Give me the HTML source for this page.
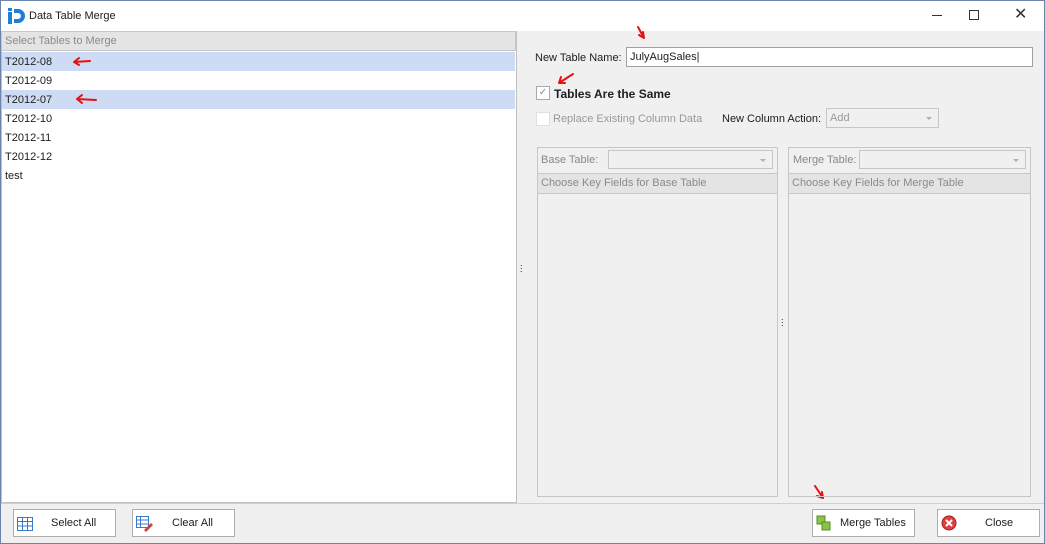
<!DOCTYPE html>
<html><head><style>
*{box-sizing:border-box;margin:0;padding:0}
body{width:1045px;height:544px;background:#f0f0f0;font-family:"Liberation Sans",sans-serif;font-size:11px;color:#202020;position:relative;overflow:hidden}
.a{position:absolute}
.win{left:0;top:0;width:1045px;height:544px;border:1px solid #6d84a8}
.title{left:1px;top:1px;width:1043px;height:30px;background:#fff}
.row{left:2px;width:513px;height:19px;padding:4px 0 0 3px}
.sel{background:#cddcf4}
.hdr{background:#e4e4e4;border:1px solid #c8c8c8;color:#8a8a8a;padding:3px 3px}
.btn{background:#fff;border:1px solid #adadad;height:28px;top:509px}
.btn span{position:absolute;top:7px}
.dd{background:#f0f0f0;border:1px solid #c6c6c6;height:19px}
.dd:after{content:"";position:absolute;right:6px;top:8px;border:3px solid transparent;border-top:3px solid #b0b0b0}
</style></head><body>
<div class="a win"></div>
<div class="a title"></div>
<svg class="a" style="left:7px;top:7px" width="18" height="18"><rect x="1" y="5" width="4" height="12" fill="#1f7fd8"/><rect x="1" y="1" width="4" height="3" fill="#1f7fd8"/><path d="M7 2h4a7 7 0 0 1 0 14h-4v-4h4a3 3 0 0 0 0-6h-4z" fill="#1f7fd8"/></svg>
<div class="a" style="left:29px;top:10px;font-size:11px">Data Table Merge</div>
<div class="a" style="left:932px;top:15px;width:10px;height:1px;background:#333"></div>
<div class="a" style="left:969px;top:10px;width:10px;height:10px;border:1px solid #333"></div>
<div class="a" style="left:1014px;top:4px;font-size:16px;color:#333">✕</div>

<div class="a" style="left:1px;top:31px;width:516px;height:472px;background:#fff;border:1px solid #c0c0c0"></div>
<div class="a hdr" style="left:1px;top:31px;width:515px;height:20px">Select Tables to Merge</div>
<div class="a row sel" style="top:52px">T2012-08</div>
<div class="a row" style="top:71px">T2012-09</div>
<div class="a row sel" style="top:90px">T2012-07</div>
<div class="a row" style="top:109px">T2012-10</div>
<div class="a row" style="top:128px">T2012-11</div>
<div class="a row" style="top:147px">T2012-12</div>
<div class="a row" style="top:166px">test</div>
<svg class="a" style="left:0;top:0" width="1045" height="544" fill="none" stroke="#e81010" stroke-width="2" stroke-linecap="round">
<path d="M90 61L74 62M74 62l5-4M74 62l5 3"/>
<path d="M96 100L77 99M77 99l5-4M77 99l5 4"/>
<path d="M638 27l6 11M644 38l-1-6M644 38l-5-3"/>
<path d="M573 74l-14 9M559 83l6 0M559 83l2-6"/>
<path d="M815 486l8 12M823 498l-1-6M823 498l-6-2"/>
</svg>
<div class="a" style="left:520px;top:262px;font-size:9px;line-height:3px">.<br>.<br>.</div>

<div class="a" style="left:535px;top:52px">New Table Name:</div>
<div class="a" style="left:626px;top:47px;width:407px;height:20px;background:#fff;border:1px solid #a0a0a0;padding:3px 3px">JulyAugSales|</div>
<div class="a" style="left:536px;top:86px;width:14px;height:14px;border:1px solid #a8a8a8;background:#fff;color:#888;font-size:10px;text-align:center">✓</div>
<div class="a" style="left:554px;top:87px;font-weight:bold;font-size:12px">Tables Are the Same</div>
<div class="a" style="left:536px;top:112px;width:14px;height:14px;border:1px solid #e0e0e0;background:#fff"></div>
<div class="a" style="left:553px;top:113px;color:#999">Replace Existing Column Data</div>
<div class="a" style="left:722px;top:113px">New Column Action:</div>
<div class="a dd" style="left:826px;top:108px;width:113px;height:20px;color:#999;padding:3px 3px">Add</div>

<div class="a" style="left:537px;top:147px;width:241px;height:350px;border:1px solid #c6c6c6"></div>
<div class="a" style="left:541px;top:154px;color:#888">Base Table:</div>
<div class="a dd" style="left:608px;top:150px;width:165px"></div>
<div class="a hdr" style="left:537px;top:173px;width:241px;height:21px">Choose Key Fields for Base Table</div>
<div class="a" style="left:788px;top:147px;width:243px;height:350px;border:1px solid #c6c6c6"></div>
<div class="a" style="left:793px;top:154px;color:#888">Merge Table:</div>
<div class="a dd" style="left:859px;top:150px;width:167px"></div>
<div class="a hdr" style="left:788px;top:173px;width:243px;height:21px">Choose Key Fields for Merge Table</div>
<div class="a" style="left:781px;top:316px;font-size:9px;line-height:3px">.<br>.<br>.</div>

<div class="a" style="left:1px;top:503px;width:1043px;height:1px;background:#d0d0d0"></div>
<div class="a btn" style="left:13px;width:103px"><svg class="a" style="left:3px;top:7px" width="16" height="14"><rect x=".5" y=".5" width="15" height="13" fill="#fff" stroke="#3a78c8"/><path d="M.5 4.5h15M.5 9h15M5.5 .5v13M10.5 .5v13" stroke="#3a78c8"/></svg><span style="left:37px">Select All</span></div>
<div class="a btn" style="left:132px;width:103px"><svg class="a" style="left:3px;top:6px" width="18" height="16"><rect x=".5" y=".5" width="12" height="11" fill="#fff" stroke="#3a78c8"/><path d="M.5 4h12M.5 8h12M4.5 .5v11" stroke="#3a78c8"/><path d="M8 14l7-7 2 2-7 7z" fill="#d04040"/></svg><span style="left:39px">Clear All</span></div>
<div class="a btn" style="left:812px;width:103px"><svg class="a" style="left:3px;top:5px" width="16" height="16"><rect x="1" y="1" width="8" height="8" fill="#8bc34a" stroke="#5a8a20"/><rect x="6" y="7" width="8" height="8" fill="#8bc34a" stroke="#5a8a20"/></svg><span style="left:27px">Merge Tables</span></div>
<div class="a btn" style="left:937px;width:103px"><svg class="a" style="left:3px;top:5px" width="16" height="16"><circle cx="8" cy="8" r="7" fill="#e04040" stroke="#a02020"/><path d="M5 5l6 6M11 5l-6 6" stroke="#fff" stroke-width="2"/></svg><span style="left:47px">Close</span></div>
</body></html>
